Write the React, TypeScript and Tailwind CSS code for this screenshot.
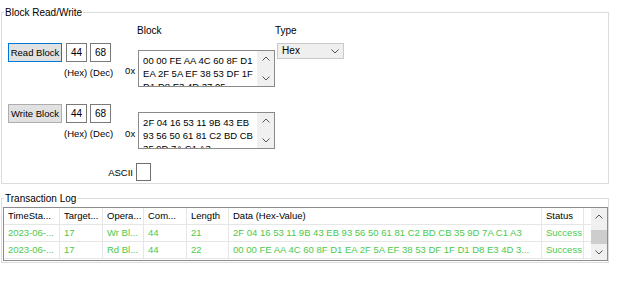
import React from "react";

type Dir = "up" | "down";

const Chevron = ({ dir }: { dir: Dir }) => (
  <svg width="8" height="5" viewBox="0 0 8 5">
    <polyline
      points={dir === "up" ? "0.5,4.5 4,1 7.5,4.5" : "0.5,0.5 4,4 7.5,0.5"}
      fill="none"
      stroke="#555"
      strokeWidth="1"
    />
  </svg>
);

// hex box with the little up/down scroller on the right
const HexBox = ({ lines }: { lines: string[] }) => (
  <div className="flex h-[37px] w-[137px] overflow-hidden border border-[#8a8a8a] bg-white">
    <div className="flex-1 overflow-hidden pl-[4px] pt-[3px] text-[9.5px] whitespace-nowrap">
      {lines.map((l) => (
        <div key={l} className="h-[13px]">
          {l}
        </div>
      ))}
    </div>
    <div className="flex w-[17px] shrink-0 flex-col items-center justify-between bg-[#f0f0f0] pt-[5px] pb-[5px]">
      <Chevron dir="up" />
      <Chevron dir="down" />
    </div>
  </div>
);

const ByteInput = ({ value }: { value: string }) => (
  <div className="h-[19px] w-[21px] border border-[#7a7a7a] bg-white text-center leading-[17px]">
    {value}
  </div>
);

const AddressBlock = ({ label, focused }: { label: string; focused?: boolean }) => (
  <div className="ml-[6px] flex flex-col">
    <div className="flex">
      <div
        className={`h-[19px] w-[54px] border bg-[#e1e1e1] text-center text-[9.5px] leading-[17px] whitespace-nowrap ${
          focused ? "border-[#0078d7]" : "border-[#adadad]"
        }`}
      >
        {label}
      </div>
      <div className="ml-[4px]">
        <ByteInput value="44" />
      </div>
      <div className="ml-[3px]">
        <ByteInput value="68" />
      </div>
    </div>
    <div className="mt-[4px] pl-[56px] text-[9.5px] whitespace-nowrap">(Hex) (Dec)</div>
  </div>
);

const cols = [
  { label: "TimeSta...", w: "w-[56px]" },
  { label: "Target...", w: "w-[43px]" },
  { label: "Opera...", w: "w-[41px]" },
  { label: "Com...", w: "w-[43px]" },
  { label: "Length", w: "w-[42px]" },
  { label: "Data (Hex-Value)", w: "w-[313px]" },
  { label: "Status", w: "w-[42px]" },
];

const log = [
  ["2023-06-...", "17", "Wr Bl...", "44", "21", "2F 04 16 53 11 9B 43 EB 93 56 50 61 81 C2 BD CB 35 9D 7A C1 A3", "Success"],
  ["2023-06-...", "17", "Rd Bl...", "44", "22", "00 00 FE AA 4C 60 8F D1 EA 2F 5A EF 38 53 DF 1F D1 D8 E3 4D 3...", "Success"],
];

const LogRow = ({ cells, green }: { cells: string[]; green?: boolean }) => (
  <div className={`flex h-[17px] border-b border-[#e6e6e6] text-[9.5px] ${green ? "text-[#4cc94c]" : "text-black"}`}>
    {cols.map((c, i) => (
      <div
        key={c.label}
        className={`${c.w} shrink-0 overflow-hidden border-r border-[#e6e6e6] pl-[4px] leading-[16px] whitespace-nowrap`}
      >
        {cells[i]}
      </div>
    ))}
    <div className="flex-1" />
  </div>
);

export default function App() {
  return (
    <div className="h-[305px] w-[640px] overflow-hidden bg-white pt-[6px] font-['Liberation_Sans',Arial,sans-serif] text-[10px] leading-[13px] text-black">
      {/* BLOCK READ / WRITE */}
      <fieldset className="ml-[1px] w-[608px] border border-[#dcdcdc]">
        <legend className="ml-[2px] px-[1px] leading-[13px]">Block Read/Write</legend>
        <div className="flex h-[164px] flex-col">
          <div className="mt-[5px] flex h-[13px]">
            <div className="ml-[135px] w-[138px]">Block</div>
            <div>Type</div>
          </div>

          <div className="mt-[6px] flex h-[61px] items-start">
            <AddressBlock label="Read Block" focused />
            <div className="ml-[12px] mt-[21px] w-[13px] text-[9.5px]">0x</div>
            <div className="mt-[7px]">
              <HexBox lines={["00 00 FE AA 4C 60 8F D1", "EA 2F 5A EF 38 53 DF 1F", "D1 D8 E3 4D 37 05"]} />
            </div>
            <div className="ml-[2px] flex h-[16px] w-[67px] items-center justify-between border border-[#c9c9c9] bg-[#efefef] pl-[4px] pr-[4px]">
              <span className="leading-[14px]">Hex</span>
              <Chevron dir="down" />
            </div>
          </div>

          <div className="flex h-[59px] items-start">
            <AddressBlock label="Write Block" />
            <div className="ml-[12px] mt-[23px] w-[13px] text-[9.5px]">0x</div>
            <div className="mt-[8px]">
              <HexBox lines={["2F 04 16 53 11 9B 43 EB", "93 56 50 61 81 C2 BD CB", "35 9D 7A C1 A3"]} />
            </div>
          </div>

          <div className="flex h-[18px] items-center">
            <div className="w-[131px] text-right text-[9.5px]">ASCII</div>
            <div className="ml-[3px] h-[18px] w-[15px] border border-[#707070] bg-white" />
          </div>
        </div>
      </fieldset>

      {/* TRANSACTION LOG */}
      <fieldset className="ml-[1px] mt-[8px] w-[608px] border border-[#dcdcdc] pb-[1px]">
        <legend className="ml-[2px] px-[1px] leading-[13px]">Transaction Log</legend>
        <div className="ml-[1px] mt-[2px] flex h-[54px] w-[605px] border border-[#8c8c8c] bg-white">
          <div className="flex flex-1 flex-col overflow-hidden">
            <LogRow cells={cols.map((c) => c.label)} />
            {log.map((r, i) => (
              <LogRow key={i} cells={r} green />
            ))}
          </div>
          <div className="flex w-[16px] shrink-0 flex-col items-center bg-[#f0f0f0]">
            <div className="flex h-[17px] items-center">
              <Chevron dir="up" />
            </div>
            <div className="mt-[5px] h-[14px] w-[16px] bg-[#cdcdcd]" />
            <div className="flex flex-1 items-center">
              <Chevron dir="down" />
            </div>
          </div>
        </div>
      </fieldset>
    </div>
  );
}
